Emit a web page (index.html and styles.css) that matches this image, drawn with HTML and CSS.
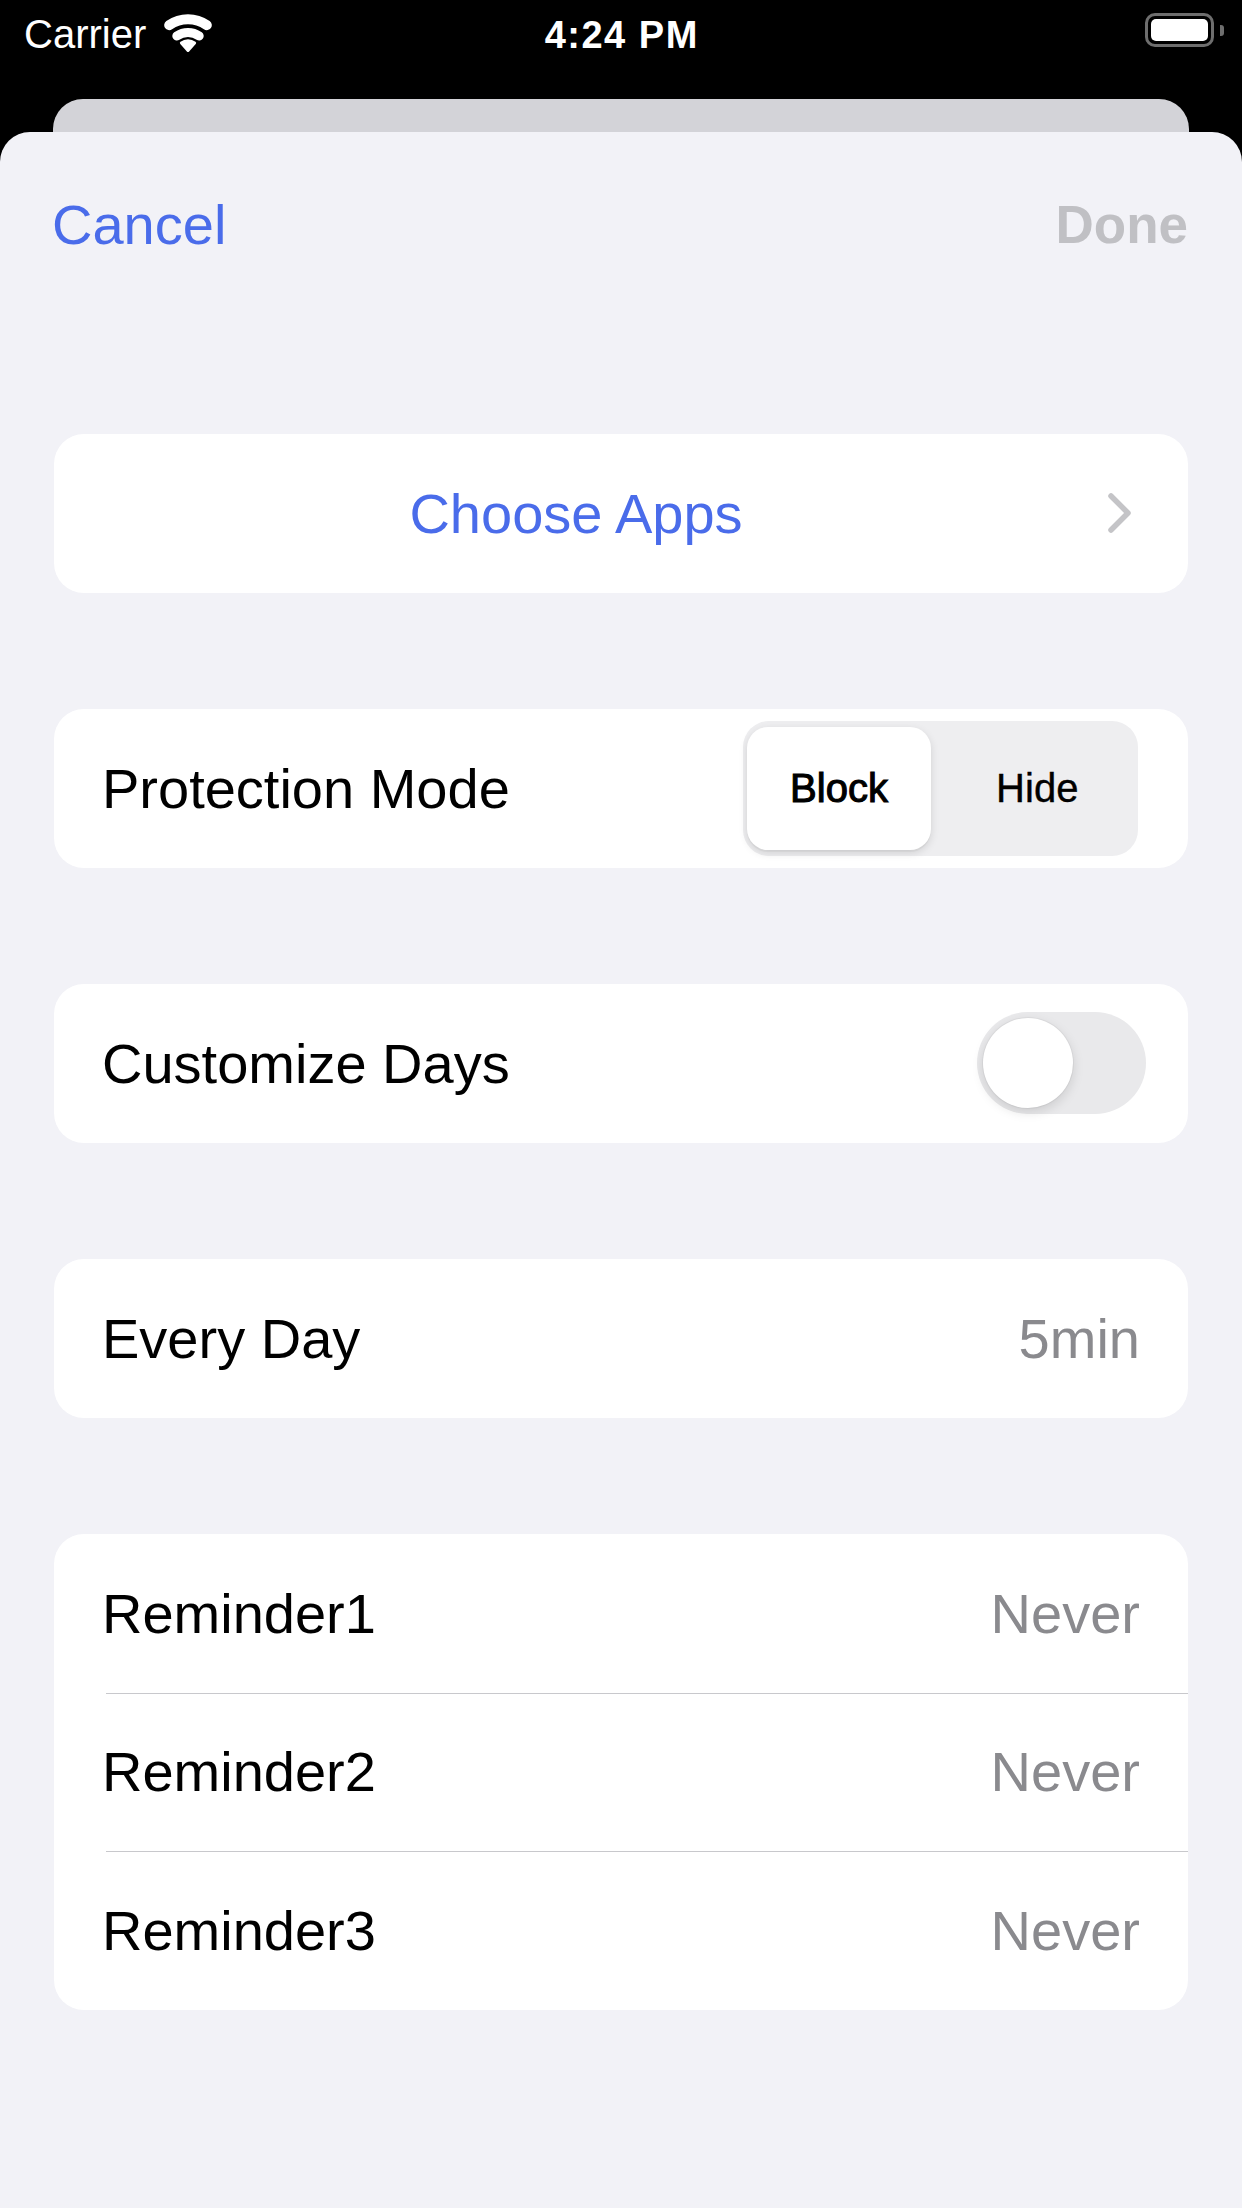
FILE: index.html
```html
<!DOCTYPE html>
<html>
<head>
<meta charset="utf-8">
<link rel="stylesheet" href="styles.css">
</head>
<body>
<div class="screen">
  <div class="statusbar">
    <div class="sb-left">
      <span class="carrier">Carrier</span>
      <svg class="wifi" viewBox="0 0 48 40" width="48" height="40">
        <path d="M5.2 12.2 A32.75 32.75 0 0 1 42.8 12.2" fill="none" stroke="#fff" stroke-width="10" stroke-linecap="round"/>
        <path d="M12.8 23 A19.5 19.5 0 0 1 35.2 23" fill="none" stroke="#fff" stroke-width="9" stroke-linecap="round"/>
        <path d="M24 37.5 L17.4 30 A11 11 0 0 1 30.6 30 Z" fill="#fff" stroke="#fff" stroke-width="3" stroke-linejoin="round"/>
      </svg>
    </div>
    <div class="sb-time">4:24 PM</div>
    <div class="sb-right">
      <div class="battery"><div class="battery-fill"></div></div>
      <div class="battery-nub"></div>
    </div>
  </div>
  <div class="backcard"></div>
  <div class="sheet">
    <div class="nav">
      <span class="nav-cancel">Cancel</span>
      <span class="nav-done">Done</span>
    </div>
    <div class="groups">
      <div class="card">
        <div class="row row-link">
          <span class="link-text">Choose Apps</span>
          <svg class="chevron" viewBox="0 0 26 42" width="26" height="42">
            <path d="M4 4 L21 21 L4 38" fill="none" stroke="#c4c4c7" stroke-width="5.5" stroke-linecap="round" stroke-linejoin="round"/>
          </svg>
        </div>
      </div>
      <div class="card">
        <div class="row">
          <span class="label">Protection Mode</span>
          <div class="segmented">
            <div class="seg seg-selected">Block</div>
            <div class="seg">Hide</div>
          </div>
        </div>
      </div>
      <div class="card">
        <div class="row">
          <span class="label">Customize Days</span>
          <div class="switch"><div class="knob"></div></div>
        </div>
      </div>
      <div class="card">
        <div class="row">
          <span class="label">Every Day</span>
          <span class="value">5min</span>
        </div>
      </div>
      <div class="card">
        <div class="row">
          <span class="label">Reminder1</span>
          <span class="value">Never</span>
        </div>
        <div class="row">
          <span class="label">Reminder2</span>
          <span class="value">Never</span>
        </div>
        <div class="row">
          <span class="label">Reminder3</span>
          <span class="value">Never</span>
        </div>
      </div>
    </div>
  </div>
</div>
</body>
</html>
```

FILE: styles.css
```css
* { box-sizing: border-box; }
html, body {
  margin: 0;
  padding: 0;
  background: #000;
}
body {
  font-family: "Liberation Sans", Arial, sans-serif;
  width: 1242px;
  height: 2208px;
  overflow: hidden;
}
.screen {
  width: 1242px;
  height: 2208px;
  display: flex;
  flex-direction: column;
  background: #000;
}

/* status bar */
.statusbar {
  height: 99px;
  flex: none;
  display: grid;
  grid-template-columns: 1fr auto 1fr;
  align-items: start;
  color: #fff;
}
.sb-left {
  display: flex;
  align-items: flex-start;
  padding-left: 24px;
}
.carrier {
  font-size: 40px;
  line-height: 40px;
  margin-top: 14px;
}
.wifi {
  margin-top: 13px;
  margin-left: 18px;
  display: block;
}
.sb-time {
  font-size: 38px;
  line-height: 38px;
  font-weight: 700;
  letter-spacing: 1.5px;
  margin-top: 16px;
  margin-right: -1.5px;
}
.sb-right {
  display: flex;
  justify-content: flex-end;
  align-items: center;
  padding-right: 18px;
  margin-top: 13px;
}
.battery {
  width: 69px;
  height: 34px;
  border: 3.5px solid #6e6e6e;
  border-radius: 10px;
  padding: 3px;
}
.battery-fill {
  width: 100%;
  height: 100%;
  background: #fff;
  border-radius: 5px;
}
.battery-nub {
  width: 4px;
  height: 11px;
  margin-left: 6px;
  background: #6e6e6e;
  border-radius: 0 3px 3px 0;
}

/* stacked card behind sheet */
.backcard {
  flex: none;
  height: 33px;
  margin: 0 53px;
  background: #d3d3d8;
  border-radius: 30px 30px 0 0;
}

/* sheet */
.sheet {
  flex: 1;
  background: #f2f2f7;
  border-radius: 30px 30px 0 0;
}
.nav {
  display: flex;
  justify-content: space-between;
  align-items: center;
  padding: 65px 54px 0 52px;
  height: 121px;
}
.nav-cancel {
  font-size: 56px;
  line-height: 56px;
  color: #4a6cea;
}
.nav-done {
  font-size: 53px;
  line-height: 56px;
  font-weight: 700;
  color: #c0c0c4;
}

.groups {
  margin-top: 181px;
  display: flex;
  flex-direction: column;
  gap: 116.5px;
}
.card {
  margin: 0 54px;
  background: #fff;
  border-radius: 30px;
  overflow: hidden;
}
.row {
  height: 158.5px;
  display: flex;
  align-items: center;
  justify-content: space-between;
  padding: 0 48px;
  font-size: 56px;
  color: #000;
}
.row + .row {
  background: linear-gradient(#c8c8cc, #c8c8cc) 52px 0 / calc(100% - 52px) 1px no-repeat;
}
.value {
  color: #8a8a8e;
}

.row-link {
  padding-right: 55px;
}
.link-text {
  flex: 1;
  text-align: center;
  color: #4a6cea;
}
.chevron {
  flex: none;
  margin-left: 57px;
  display: block;
}

/* segmented control */
.segmented {
  width: 395px;
  height: 135px;
  margin-right: 2px;
  background: #eeeef0;
  border-radius: 26px;
  padding: 6px 4px;
  display: grid;
  grid-template-columns: 1fr 1fr;
}
.seg {
  display: flex;
  align-items: center;
  justify-content: center;
  font-size: 40px;
  color: #000;
  -webkit-text-stroke: 0.4px #000;
}
.seg-selected {
  background: #fff;
  border-radius: 21px;
  margin-right: 9.5px;
  -webkit-text-stroke: 1.1px #000;
  box-shadow: 0 3px 8px rgba(0, 0, 0, 0.12), 0 2px 1px rgba(0, 0, 0, 0.04);
}

/* toggle */
.switch {
  width: 169px;
  height: 102px;
  margin-right: -6px;
  border-radius: 51px;
  background: #e9e9eb;
  padding: 6px;
}
.knob {
  width: 90px;
  height: 90px;
  border-radius: 50%;
  background: #fff;
  box-shadow: 0 4px 12px rgba(0, 0, 0, 0.13), 0 0 0 1px rgba(0, 0, 0, 0.04);
}
```
